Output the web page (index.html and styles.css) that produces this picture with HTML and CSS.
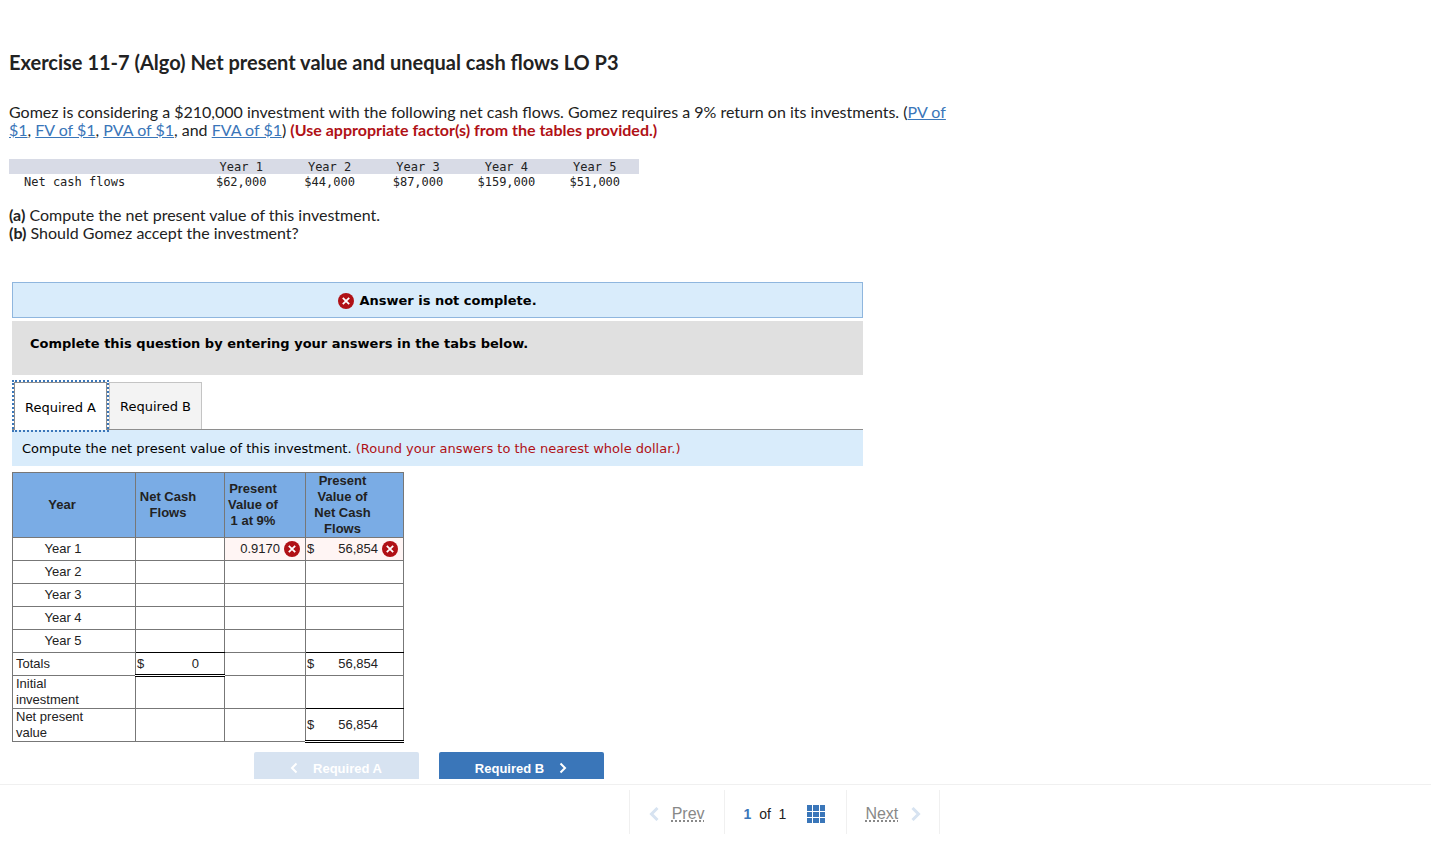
FILE: index.html
```
<!DOCTYPE html>
<html lang="en">
<head>
    <meta charset="UTF-8">
    <meta name="viewport" content="width=device-width, initial-scale=1.0">
    <title>Exercise 11-7 (Algo)</title>
    <link rel="stylesheet" href="styles.css">
</head>
<body>

    <!-- Shared icons -->
    <svg class="icon-defs" width="0" height="0" aria-hidden="true">
        <symbol id="icon-wrong" viewBox="0 0 16 16">
            <circle cx="8" cy="8" r="8" fill="#b01116"/>
            <path d="M4.8 4.8l6.4 6.4M11.2 4.8l-6.4 6.4" stroke="#fff" stroke-width="1.8" fill="none"/>
        </symbol>
    </svg>

    <main class="question">
        <section class="prompt">
            <h1>Exercise 11-7 (Algo) Net present value and unequal cash flows LO P3</h1>
            <p>Gomez is considering a $210,000 investment with the following net cash flows. Gomez requires a 9% return on its investments. (<a href="#">PV of $1</a>, <a href="#">FV of $1</a>, <a href="#">PVA of $1</a>, and <a href="#">FVA of $1</a>) <strong class="note">(Use appropriate factor(s) from the tables provided.)</strong></p>

            <table class="given">
                <thead>
                    <tr><th class="given-label"></th><th>Year 1</th><th>Year 2</th><th>Year 3</th><th>Year 4</th><th>Year 5</th></tr>
                </thead>
                <tbody>
                    <tr><td class="given-label">Net cash flows</td><td>$62,000</td><td>$44,000</td><td>$87,000</td><td>$159,000</td><td>$51,000</td></tr>
                </tbody>
            </table>

            <p><strong>(a)</strong> Compute the net present value of this investment.<br><strong>(b)</strong> Should Gomez accept the investment?</p>
        </section>

        <section class="answer">
            <div class="status">
                <svg class="icon"><use href="#icon-wrong"/></svg>
                <span>Answer is not complete.</span>
            </div>
            <div class="instructions">Complete this question by entering your answers in the tabs below.</div>

            <div class="tabs" role="tablist">
                <button class="tab active" role="tab" aria-selected="true">Required A</button>
                <button class="tab" role="tab" aria-selected="false">Required B</button>
            </div>
            <div class="tab-prompt">Compute the net present value of this investment. <span class="note">(Round your answers to the nearest whole dollar.)</span></div>

            <table class="sheet">
                <colgroup>
                    <col class="col-year"><col class="col-cash"><col class="col-factor"><col class="col-value">
                </colgroup>
                <thead>
                    <tr>
                        <th>Year</th>
                        <th>Net Cash<br>Flows</th>
                        <th>Present<br>Value of<br>1 at 9%</th>
                        <th>Present<br>Value of<br>Net Cash<br>Flows</th>
                    </tr>
                </thead>
                <tbody>
                    <tr>
                        <td class="year">Year 1</td>
                        <td></td>
                        <td class="wrong"><div class="cell"><span class="amount">0.9170</span><svg class="icon"><use href="#icon-wrong"/></svg></div></td>
                        <td class="wrong"><div class="cell"><span>$</span><span class="amount">56,854</span><svg class="icon"><use href="#icon-wrong"/></svg></div></td>
                    </tr>
                    <tr><td class="year">Year 2</td><td></td><td></td><td></td></tr>
                    <tr><td class="year">Year 3</td><td></td><td></td><td></td></tr>
                    <tr><td class="year">Year 4</td><td></td><td></td><td></td></tr>
                    <tr><td class="year">Year 5</td><td class="above-sum"></td><td></td><td class="above-sum"></td></tr>
                    <tr>
                        <td>Totals</td>
                        <td class="total"><div class="cell"><span>$</span><span class="amount">0</span><span class="mark"></span></div></td>
                        <td></td>
                        <td><div class="cell"><span>$</span><span class="amount">56,854</span><span class="mark"></span></div></td>
                    </tr>
                    <tr><td>Initial<br>investment</td><td></td><td></td><td class="above-sum"></td></tr>
                    <tr>
                        <td>Net present<br>value</td>
                        <td></td>
                        <td></td>
                        <td class="total"><div class="cell"><span>$</span><span class="amount">56,854</span><span class="mark"></span></div></td>
                    </tr>
                </tbody>
            </table>

            <div class="steps">
                <button class="step" disabled>
                    <svg class="chevron" viewBox="0 0 8 12"><path d="M6.5 1.5L2 6l4.5 4.5"/></svg>
                    Required A
                </button>
                <button class="step">
                    Required B
                    <svg class="chevron" viewBox="0 0 8 12"><path d="M1.5 1.5L6 6l-4.5 4.5"/></svg>
                </button>
            </div>
        </section>
    </main>

    <footer class="pager">
        <div class="pager-item">
            <svg class="arrow" viewBox="0 0 10 14"><path d="M8.5 1L2.5 7l6 6"/></svg>
            <a class="pager-link" href="#">Prev</a>
        </div>
        <div class="pager-item pager-count">
            <span><b>1</b>&nbsp; of &nbsp;1</span>
            <svg class="grid" viewBox="0 0 18 18" fill="#3a76b9">
                <path d="M0 0h5v6H0zM6 0h6v6H6zM13 0h5v6h-5zM0 7h5v5H0zM6 7h6v5H6zM13 7h5v5h-5zM0 13h5v5H0zM6 13h6v5H6zM13 13h5v5h-5z"/>
            </svg>
        </div>
        <div class="pager-item">
            <a class="pager-link" href="#">Next</a>
            <svg class="arrow" viewBox="0 0 10 14"><path d="M1.5 1l6 6-6 6"/></svg>
        </div>
    </footer>

</body>
</html>
```
FILE: styles.css
```
:root {
    --blue: #3a76b9;
    --pale-blue: #d7e3f1;
    --panel-blue: #d9ecfb;
    --red: #b01116;
    --text: #222;
    --grid-line: #777;
}

* {
    box-sizing: border-box;
}

body {
    margin: 0;
    height: 100vh;
    display: flex;
    flex-direction: column;
    background: #fff;
    color: var(--text);
    font-family: "Liberation Sans", Arial, sans-serif;
}

button {
    font: inherit;
    cursor: pointer;
}

.icon-defs {
    position: absolute;
}

.icon {
    width: 16px;
    height: 16px;
    flex: none;
}

.note {
    color: var(--red);
}

/* Question text */
.question {
    flex: 1;
    min-height: 0;
    overflow: hidden;
    padding: 50px 9px 0;
}

.prompt {
    max-width: 940px;
    font: 16px/18px Lato, sans-serif;
}

.prompt h1 {
    margin: 0 0 28px;
    font-size: 20px;
    line-height: 25px;
}

.prompt p {
    margin: 0;
}

.prompt a {
    color: var(--blue);
}

.given {
    width: 630px;
    margin: 20px 0 17px;
    border-collapse: collapse;
    table-layout: fixed;
    font: 12px/14px "DejaVu Sans Mono", monospace;
    text-align: center;
}

.given th,
.given td {
    padding: 1px 0 0;
    height: 15px;
    font-weight: normal;
}

.given thead {
    background: #d8dbe6;
}

.given .given-label {
    width: 188px;
    padding-left: 15px;
    text-align: left;
}

/* Answer panel */
.answer {
    max-width: 851px;
    margin: 40px 0 0 3px;
}

.status {
    display: flex;
    align-items: center;
    justify-content: center;
    gap: 5px;
    height: 36px;
    padding-top: 2px;
    border: 1px solid #8fb6de;
    background: var(--panel-blue);
    color: #000;
    font: bold 13px/16px "DejaVu Sans", Verdana, sans-serif;
}

.instructions {
    margin-top: 3px;
    padding: 15px 18px 23px;
    background: #e0e0e0;
    color: #000;
    font: bold 13px/16px "DejaVu Sans", Verdana, sans-serif;
}

.tabs {
    display: flex;
    gap: 2px;
    padding: 7px 2px 0;
    border-bottom: 1px solid #8e8e8e;
}

.tab {
    width: 93px;
    height: 47px;
    padding: 2px 0 0;
    border: 1px solid #c4c4c4;
    border-bottom: 0;
    background: #f3f3f3;
    color: #000;
    font: 13px/16px "DejaVu Sans", Verdana, sans-serif;
}

.tab.active {
    margin-bottom: -1px;
    height: 48px;
    border-color: #8e8e8e;
    background: #fff;
    outline: 2px dotted var(--blue);
}

.tab-prompt {
    padding: 11px 10px 9px;
    background: var(--panel-blue);
    color: #000;
    font: 13px/16px "DejaVu Sans", Verdana, sans-serif;
}

/* Worksheet */
.sheet {
    width: 392px;
    margin-top: 6px;
    border-collapse: collapse;
    table-layout: fixed;
    font-size: 13px;
    line-height: 16px;
}

.col-year { width: 123px; }
.col-cash { width: 89px; }
.col-factor { width: 81px; }
.col-value { width: 98px; }

.sheet th,
.sheet td {
    height: 23px;
    padding: 0 0 0 3px;
    border: 1px solid var(--grid-line);
    text-align: left;
}

.sheet th,
.sheet .year {
    padding: 0 25px 0 1px;
    text-align: center;
}

.sheet .year {
    padding-left: 3px;
}

.sheet th {
    background: #7aace5;
}

.sheet .wrong {
    background: #fff5f4;
}

.sheet .above-sum {
    border-bottom-color: #000;
}

.sheet .total {
    border-bottom: 3px double #000;
}

.cell {
    display: flex;
    align-items: center;
    gap: 4px;
    margin-left: -2px;
    padding-right: 5px;
}

.amount {
    margin-left: auto;
}

.mark {
    width: 16px;
}

/* Previous / next part */
.steps {
    display: flex;
    justify-content: center;
    gap: 20px;
    margin-top: 9px;
    padding-right: 18px;
}

.step {
    display: flex;
    align-items: center;
    justify-content: center;
    gap: 15px;
    width: 165px;
    height: 27px;
    padding: 5px 0 0;
    border: 0;
    border-radius: 2px 2px 0 0;
    background: var(--blue);
    color: #fff;
    font-size: 13px;
    font-weight: bold;
}

.step:disabled {
    background: var(--pale-blue);
    cursor: default;
}

.chevron {
    width: 8px;
    height: 12px;
    fill: none;
    stroke: #fff;
    stroke-width: 2;
}

/* Bottom pager */
.pager {
    display: flex;
    justify-content: center;
    height: 59px;
    padding: 5px 0 9px 138px;
    border-top: 1px solid #f0f0f0;
}

.pager-item {
    display: flex;
    align-items: center;
    gap: 13px;
    padding: 4px 19px 0;
    border-left: 1px solid #f0f0f0;
}

.pager-item:last-child {
    padding: 4px 18px 0;
    border-right: 1px solid #f0f0f0;
}

.pager-count {
    gap: 21px;
    font-size: 14px;
}

.pager-count .grid {
    margin-right: 2px;
}

.pager b {
    color: var(--blue);
}

.pager-link {
    color: #888;
    font-size: 16px;
    text-decoration: underline dotted 2px;
    text-underline-offset: 1px;
}

.arrow {
    width: 10px;
    height: 14px;
    fill: none;
    stroke: var(--pale-blue);
    stroke-width: 3;
}

.grid {
    width: 18px;
    height: 18px;
}
```
